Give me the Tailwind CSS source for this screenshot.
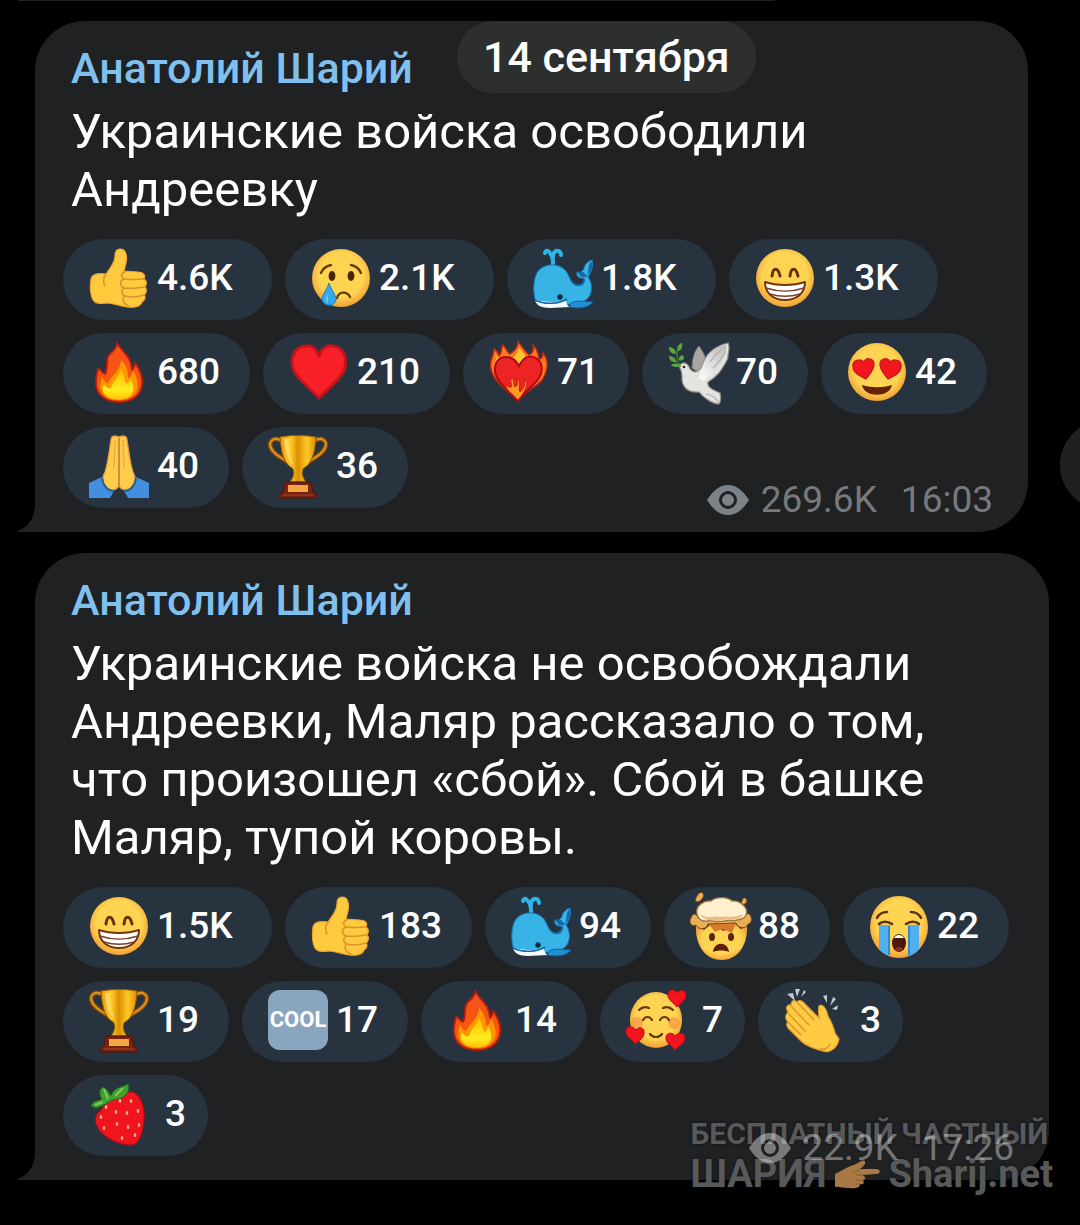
<!DOCTYPE html>
<html lang="ru">
<head>
    <meta charset="UTF-8">
    <meta name="viewport" content="width=device-width, initial-scale=1.0">
    <title>Анатолий Шарий</title>
    <script src="https://cdn.jsdelivr.net/npm/@tailwindcss/browser@4"></script>
</head>
<body class="bg-black font-['Roboto',sans-serif] text-white">
    <!-- Reaction icons -->
    <svg class="absolute size-0" aria-hidden="true">
        <defs>
            <radialGradient id="face" cx=".5" cy=".45" r=".55">
                <stop offset=".7" stop-color="#ffd452"/>
                <stop offset="1" stop-color="#f0a136"/>
            </radialGradient>
            <linearGradient id="flame" x1="0" y1="0" x2="0" y2="1">
                <stop offset="0" stop-color="#f4511e"/>
                <stop offset="1" stop-color="#f95a06"/>
            </linearGradient>
            <linearGradient id="flame-core" x1="0" y1="0" x2="0" y2="1">
                <stop offset="0" stop-color="#ffb300"/>
                <stop offset=".7" stop-color="#ffee1f"/>
                <stop offset="1" stop-color="#ffc107"/>
            </linearGradient>
            <linearGradient id="gold" x1="0" y1="0" x2="1" y2="0">
                <stop offset="0" stop-color="#e89e0c"/>
                <stop offset=".3" stop-color="#ffc928"/>
                <stop offset=".5" stop-color="#d99000"/>
                <stop offset=".75" stop-color="#ffc928"/>
                <stop offset="1" stop-color="#dc8d06"/>
            </linearGradient>
            <linearGradient id="wing" x1="0" y1="1" x2="1" y2="0">
                <stop offset="0" stop-color="#ffffff"/>
                <stop offset="1" stop-color="#b9b9b9"/>
            </linearGradient>

            <symbol id="thumb" class="overflow-visible" viewBox="0 0 60 60">
                <path fill="#ffca3e" stroke="#eda434" stroke-width="1.2" d="M31 1C27 1 26 4 26 8C26 15 21 20 17 26C10 25 3 26 2 31C1 38 1 46 4 52C7 57 14 55 19 55C27 56 32 58 38 59C46 60 52 58 53 54C56 52 57 49 55 47C58 45 58 41 56 39C58 36 58 33 55 31C57 27 54 24 49 24L35 23C36 18 39 12 37 6C36 2 34 1 31 1Z"/>
                <path fill="none" stroke="#e08f2b" stroke-width="1.5" stroke-linecap="round" d="M36 24C32 25 31 28 35 31C30 33 31 38 35 40C31 43 33 47 36 48C32 51 35 57 40 58M35 31C42 32 49 31 55 31M35 40C42 41 49 40 56 39M36 48C42 50 49 49 55 47M17 26C14 30 14 34 16 38"/>
            </symbol>

            <symbol id="cry" class="overflow-visible" viewBox="0 0 60 60">
                <circle cx="30" cy="30" r="29" fill="url(#face)"/>
                <g fill="none" stroke="#6b3b05" stroke-width="2.4" stroke-linecap="round">
                    <path d="M10 25C12 20 15 18 20 17M40 17C45 18 48 20 50 25M26 50C28 43 36 43 39 49"/>
                </g>
                <ellipse cx="21" cy="28" rx="3.4" ry="5" fill="#4a2503"/>
                <ellipse cx="40" cy="28" rx="3.4" ry="5" fill="#4a2503"/>
                <path fill="#36a9e8" stroke="#2184c7" d="M18 35C16 42 11 46 11 51C12 59 24 59 25 52C25 46 20 42 18 35Z"/>
                <path fill="#74c6f0" d="M17 46C14 49 14 53 17 55Z"/>
            </symbol>

            <symbol id="whale" class="overflow-visible" viewBox="0 0 60 60">
                <path fill="none" stroke="#2fb4e8" stroke-width="4" stroke-linecap="round" d="M20 16C20 11 20 8 17 5C15 2 13 2 12 5M20 9C20 4 23 2 25 3C27 3 28 5 28 7"/>
                <path fill="#38b3e6" stroke="#1476bb" stroke-width="1" d="M2 51C0 43 0 28 6 22C13 15 26 15 33 23C37 29 38 36 43 37C49 38 52 35 51 30C45 31 43 27 44 24C48 25 50 23 51 20C52 16 55 13 59 12C61 18 58 25 55 29C58 33 60 40 57 47C54 54 45 56 39 56L19 58C9 58 4 57 2 51Z"/>
                <path fill="#1569aa" d="M33 23C37 29 38 37 44 38C50 39 52 35 52 32L51 30C50 35 47 37 43 36C38 34 37 28 33 23ZM44 24L48 29L55 29L50 24ZM58 13C54 18 57 24 53 28C60 24 60 17 58 13Z"/>
                <path fill="#f4fbff" d="M2 52C11 54 25 55 32 52C34 55 34 58 37 59L17 60C8 60 3 57 2 52Z"/>
                <path fill="#238fd0" stroke="#1265a8" d="M37 56C42 51 53 54 60 54C55 60 46 61 37 59Z"/>
                <path fill="none" stroke="#1368a9" stroke-width="1.5" d="M2 52C12 57 26 56 34 51"/>
                <circle cx="27" cy="49" r="2.7" fill="#0c2b45"/>
            </symbol>

            <symbol id="grin" class="overflow-visible" viewBox="0 0 60 60">
                <circle cx="30" cy="30" r="29" fill="url(#face)"/>
                <path fill="none" stroke="#6b2f05" stroke-width="3" stroke-linecap="round" d="M17 28C18 19 23 19 25 28M35 28C36 19 41 19 43 28"/>
                <path fill="#fff" stroke="#73340b" stroke-width="2" stroke-linejoin="round" d="M10 34C22 38 38 38 50 34C50 46 41 52 30 52C19 52 10 46 10 34Z"/>
                <path fill="none" stroke="#783d2a" stroke-width="1.4" d="M11 40C23 44 37 44 49 40M15 46C25 49 35 49 45 46"/>
            </symbol>

            <symbol id="fire" class="overflow-visible" viewBox="0 0 60 60">
                <path fill="url(#flame)" stroke="#b71c0c" stroke-width="1.8" stroke-linejoin="round" d="M28 1C31 8 43 14 43 28C45 26 46 24 46 21C52 28 54 37 53 43C52 53 43 60 30 60C16 60 7 52 7 42C6 35 9 30 9 26C12 28 13 31 16 32C20 25 16 19 20 13C24 9 28 7 28 1Z"/>
                <path fill="#ff9800" d="M32 18C37 23 39 28 39 36C42 35 44 31 44 28C49 37 50 45 47 50C43 56 37 58 30 58C21 58 14 55 12 48C10 43 12 39 13 35C15 39 17 41 19 41C22 34 32 28 32 18Z"/>
                <path fill="url(#flame-core)" d="M32 26C35 32 35 37 37 42C40 41 41 38 41 36C46 44 45 50 41 54C35 59 23 58 18 54C13 50 13 46 15 42C17 46 20 47 22 46C24 39 31 34 32 26Z"/>
            </symbol>

            <symbol id="heart" class="overflow-visible" viewBox="0 0 60 60">
                <path fill="#f91f27" stroke="#c2141d" stroke-width="3" stroke-linejoin="round" d="M30 56C22 48 10 38 5 29C0 17 5 5 16 4C23 3 28 7 30 14C32 7 37 3 44 4C55 5 59 17 55 29C50 38 38 48 30 56Z"/>
            </symbol>

            <symbol id="fireheart" class="overflow-visible" viewBox="0 0 60 60">
                <path fill="#ff7a1a" stroke="#c62713" stroke-width="1.4" d="M29 59C18 48 5 41 2 27C0 18 5 15 5 7C9 9 9 12 10 14C13 12 12 6 14 3C18 7 18 11 21 12C26 9 29 6 29 0C34 5 36 10 40 13C44 11 45 7 44 3C49 8 49 12 50 17C53 17 54 14 54 11C61 20 58 30 53 38C46 46 36 49 29 59Z"/>
                <path fill="#ffc62d" d="M7 32C3 23 8 18 8 13C11 17 11 20 9 27ZM21 17C29 14 29 8 30 6C34 10 37 13 36 17L29 22Z"/>
                <path fill="#ee2424" stroke="#a80d12" stroke-width="2" d="M29 59C20 49 8 41 6 30C5 20 10 15 17 15C24 15 27 19 30 24C33 18 38 13 44 15C53 17 55 28 50 36C45 44 35 50 29 59Z"/>
                <path fill="#ff9a24" stroke="#c81f14" d="M29 58C25 53 19 50 16 43C19 44 20 46 22 45C24 42 20 39 23 36C26 39 24 42 26 45C29 44 29 40 28 36C33 40 29 46 31 50C36 46 36 41 35 36C40 42 37 49 29 58Z"/>
            </symbol>

            <symbol id="dove" class="overflow-visible" viewBox="0 0 60 60">
                <path fill="#a9a7a4" stroke="#77736d" d="M24 26C24 16 27 8 31 4C34 8 36 12 38 17L31 31Z"/>
                <path fill="#e5e3e0" stroke="#908d89" stroke-width="1.2" d="M13 22C17 19 21 23 22 27C27 32 29 30 34 25C37 11 48 4 60 1C63 7 59 12 60 16C54 28 49 35 40 40C39 45 43 47 52 51C53 55 53 59 51 62C44 62 35 55 31 50C20 51 13 45 14 34C14 29 12 26 11 24Z"/>
                <path fill="url(#wing)" d="M31 36C35 15 46 5 58 3C60 13 48 31 35 39Z"/>
                <path fill="none" stroke="#b5b2ad" stroke-width="1.2" d="M42 20C46 14 50 10 54 7M45 26C50 21 55 15 58 9M38 52C44 53 48 56 50 60"/>
                <circle cx="16" cy="25" r="1.3" fill="#282724"/>
                <path fill="none" stroke="#367c2c" stroke-width="1.7" d="M12 25C9 18 8 12 10 4"/>
                <path fill="#55a73b" d="M10 7C9 3 13 1 14 1C15 6 13 9 10 9ZM8 12C3 12 1 9 1 5C5 5 8 8 8 12ZM11 16C13 12 16 13 16 16C15 19 13 19 11 18ZM9 20C4 21 1 18 1 14C5 14 8 17 9 20ZM13 24C10 26 4 25 3 23C7 21 11 21 13 24Z"/>
            </symbol>

            <symbol id="hearteyes" class="overflow-visible" viewBox="0 0 60 60">
                <circle cx="30" cy="30" r="29" fill="url(#face)"/>
                <path fill="#f1171d" stroke="#c51a1a" stroke-width="1.2" d="M19 37C13 34 6 31 6 25C5 18 13 16 17 20C19 15 26 16 27 21C28 27 22 33 19 37Z"/>
                <path fill="#f1171d" stroke="#c51a1a" stroke-width="1.2" d="M41 37C47 34 54 31 54 25C55 18 47 16 43 20C41 15 34 16 33 21C32 27 38 33 41 37Z"/>
                <path fill="#632105" d="M15 43C25 46 35 46 45 43C43 56 17 56 15 43Z"/>
            </symbol>

            <symbol id="pray" class="overflow-visible" viewBox="0 0 60 60">
                <path fill="#438fdf" d="M0 47L13 41L26 53L21 62H0ZM60 47L47 41L34 53L39 62H60Z"/>
                <path fill="#ffcc4b" stroke="#e3983b" stroke-width="1.3" d="M30 1C25 -1 22 0 22 4C20 16 19 27 16 36C12 43 14 52 23 54C27 54 29 52 30 49C31 52 33 54 37 54C46 52 48 43 44 36C41 27 40 16 38 4C38 0 35 -1 30 1Z"/>
                <path fill="none" stroke="#ba7128" stroke-width="1.3" d="M30 2V50"/>
                <path fill="none" stroke="#f0ac45" stroke-width="1.5" d="M26 4C26 13 25 24 25 32M34 4C34 13 35 24 35 32"/>
                <path fill="none" stroke="#27618f" stroke-width="2" d="M13 42C14 50 19 55 25 55M47 42C46 50 41 55 35 55"/>
            </symbol>

            <symbol id="trophy" class="overflow-visible" viewBox="0 0 60 60">
                <path fill="none" stroke="#8d4b07" stroke-width="4.5" d="M14 5C6 0 0 5 3 12C6 19 14 22 20 26M46 5C54 0 60 5 57 12C54 19 46 22 40 26"/>
                <path fill="none" stroke="#d9951f" stroke-width="2" d="M14 5C6 0 0 5 3 12C6 19 14 22 20 26M46 5C54 0 60 5 57 12C54 19 46 22 40 26"/>
                <path fill="url(#gold)" stroke="#93590a" stroke-width="1" d="M12 1C23 -1 37 -1 48 1C47 19 43 28 36 32C33 35 34 41 38 46H22C26 41 27 35 24 32C17 28 13 19 12 1Z"/>
                <path fill="#ffd85e" d="M16 3H21C21 14 23 23 26 29C19 24 17 15 16 3Z"/>
                <path fill="#75220f" stroke="#4d1208" d="M17 46H43L45 56L49 59V62H11V59L15 56Z"/>
                <path fill="#f3a541" d="M20 49H40V56H20Z"/>
                <path stroke="#b3432b" d="M15 59H45"/>
            </symbol>

            <symbol id="mindblown" class="overflow-visible" viewBox="0 0 60 60">
                <path fill="url(#face)" d="M6 29C5 46 13 64 32 64C49 64 58 47 57 30L51 33L44 27L34 35L21 28L14 34Z"/>
                <path fill="#d67c2c" d="M18 27L25 36L32 33L42 37L46 27Z"/>
                <path fill="#eaae55" stroke="#7c4b1c" stroke-width="1" d="M1 22C-2 27 2 31 6 29C9 35 17 33 18 28L46 27C48 33 57 33 58 28C64 27 61 16 57 18L49 22L8 22C7 17 2 17 1 22ZM7 0C11 -7 16 -2 12 3C8 8 3 6 7 0ZM52 5C53 -1 59 3 56 7C54 9 50 9 52 5Z"/>
                <path fill="#fff0d0" stroke="#9e7140" stroke-width="1.3" d="M7 18C5 10 14 4 21 5C27 0 38 1 42 5C50 4 59 12 56 19C54 25 47 23 43 25C38 22 35 27 30 25C25 27 21 23 18 25C12 26 8 23 7 18Z"/>
                <path fill="#e8be84" d="M10 18C18 24 24 19 29 21C35 19 43 23 53 18C51 25 44 22 42 24C36 22 34 25 29 24C23 25 14 25 10 18Z"/>
                <ellipse cx="22" cy="41" rx="3" ry="4" fill="#55280a"/>
                <ellipse cx="41" cy="41" rx="3" ry="4" fill="#55280a"/>
                <path fill="#5c1e0a" d="M23 56C24 45 38 45 39 56C35 54 27 54 23 56Z"/>
            </symbol>

            <symbol id="sob" class="overflow-visible" viewBox="0 0 60 60">
                <ellipse cx="30" cy="31" rx="29" ry="31" fill="url(#face)"/>
                <path fill="#4fb0ed" d="M10 29H21V60C15 58 11 55 10 53ZM39 29H50V53C48 56 44 59 39 60Z"/>
                <path stroke="#2579bf" stroke-width="1.4" d="M20 30V59M40 30V59"/>
                <path fill="none" stroke="#5d3310" stroke-width="2.5" stroke-linecap="round" d="M8 22C10 18 14 16 18 16M42 16C46 16 50 18 52 22M10 28C13 25 19 25 23 28M37 28C41 25 47 25 50 28"/>
                <ellipse cx="30" cy="47" rx="7" ry="9" fill="#4a1708"/>
                <path fill="#fff" d="M25 42C27 38 33 38 35 42Z"/>
                <path fill="#8f2f20" d="M26 53C28 50 32 50 34 53C32 56 28 56 26 53Z"/>
            </symbol>

            <symbol id="lovely" class="overflow-visible" viewBox="0 0 60 60">
                <ellipse cx="30" cy="30" rx="26" ry="28" fill="url(#face)"/>
                <circle cx="11" cy="33" r="6" fill="#f59545" opacity=".7"/>
                <circle cx="48" cy="33" r="6" fill="#f59545" opacity=".7"/>
                <path fill="none" stroke="#66380e" stroke-width="2.2" stroke-linecap="round" d="M13 20C16 17 19 16 23 18M37 18C41 16 44 17 47 20M17 30C19 26 24 26 26 30M34 30C36 26 41 26 43 30M24 44C27 48 33 48 36 44"/>
                <g fill="#f4141d" stroke="#b50c18">
                    <path d="M51 17C47 12 41 9 42 4C43 -1 49 -1 51 3C54 -1 60 0 60 5C60 10 55 13 51 17Z"/>
                    <path d="M10 54C6 50 -1 46 0 41C0 36 6 35 10 40C13 36 19 38 18 43C18 48 13 50 10 54Z"/>
                    <path d="M49 60C45 55 40 53 40 48C40 42 47 42 49 46C52 42 59 42 59 48C59 53 53 56 49 60Z"/>
                </g>
            </symbol>

            <symbol id="clap" class="overflow-visible" viewBox="0 0 60 60">
                <path fill="#ffcb43" stroke="#de952e" stroke-width="1.2" d="M4 22C1 18 3 14 7 15C7 11 10 9 13 12C15 9 19 11 21 14L35 28C35 23 33 17 36 15C41 15 43 21 44 26C48 33 50 38 51 43L55 49C54 57 48 61 43 62C34 60 24 57 18 52L6 40C2 37 2 33 4 32C1 29 1 25 4 22Z"/>
                <path fill="none" stroke="#df9631" stroke-width="1.5" stroke-linecap="round" d="M7 16L25 35M13 12L30 30M4 23L21 41M4 32L17 45M36 59C40 60 44 58 46 54"/>
                <path fill="#c3c9cf" d="M3 4L11 11L9 3ZM11 -1L13 7L16 -1ZM20 0L17 7L22 2ZM39 6L43 13L43 5ZM49 7L46 16L52 9ZM48 19L54 15L53 20Z"/>
            </symbol>

            <symbol id="strawberry" class="overflow-visible" viewBox="0 0 60 60">
                <path fill="#f0141f" stroke="#b30c18" stroke-width="1.2" d="M12 26C18 17 32 7 43 8C52 10 56 24 55 36C54 49 50 60 43 61C32 61 14 55 8 42C4 35 7 30 12 26Z"/>
                <path fill="#3fa02f" stroke="#206c1d" stroke-width="1" d="M2 22C4 17 9 17 13 15C10 11 10 5 14 3C19 6 20 9 22 12C24 4 31 4 39 0C42 7 36 14 28 15C20 16 16 22 7 24Z"/>
                <path fill="none" stroke="#7dcc55" stroke-width="2" d="M15 5L19 15M26 12L34 4M6 21L14 18"/>
                <g fill="#ffb08c">
                    <ellipse cx="31" cy="17" rx="1.3" ry="2"/><ellipse cx="42" cy="17" rx="1.3" ry="2"/>
                    <ellipse cx="17" cy="23" rx="1.3" ry="2"/><ellipse cx="27" cy="28" rx="1.3" ry="2"/>
                    <ellipse cx="38" cy="29" rx="1.3" ry="2"/><ellipse cx="49" cy="27" rx="1.3" ry="2"/>
                    <ellipse cx="12" cy="33" rx="1.3" ry="2"/><ellipse cx="28" cy="40" rx="1.3" ry="2"/>
                    <ellipse cx="39" cy="43" rx="1.3" ry="2"/><ellipse cx="50" cy="41" rx="1.3" ry="2"/>
                    <ellipse cx="15" cy="44" rx="1.3" ry="2"/><ellipse cx="33" cy="54" rx="1.3" ry="2"/>
                    <ellipse cx="46" cy="51" rx="1.3" ry="2"/>
                </g>
            </symbol>

            <symbol id="eye" viewBox="0 0 42 32">
                <path fill="currentColor" fill-rule="evenodd" d="M0 16C7 5 14 1 21 1S35 5 42 16C35 27 28 31 21 31S7 27 0 16ZM21 7A9 9 0 0 0 21 25A9 9 0 0 0 21 7ZM21 10A6 6 0 0 1 21 22A6 6 0 0 1 21 10Z"/>
            </symbol>

            <symbol id="tail" viewBox="0 0 18 50">
                <path fill="currentColor" d="M17 0V24C16 37 10 45 1 48C-1 49 0 50 2 50H18V0Z"/>
            </symbol>

            <symbol id="point" viewBox="0 0 46 30">
                <path fill="#a97945" d="M1 15C8 12 14 7 20 6C24 4 28 0 31 2C32 6 28 8 26 10L42 10C47 10 47 15 42 15L28 16C33 18 31 21 29 21C31 24 29 26 26 25C26 29 21 30 15 29C8 29 4 27 1 28Z"/>
                <path fill="none" stroke="#8a6034" d="M26 10C23 12 21 13 19 12M28 16H22M29 21H22M26 25H20"/>
            </symbol>
        </defs>
    </svg>

    <main class="relative min-h-screen overflow-hidden">
        <!-- Edge of the previous message -->
        <div class="ml-[18px] mr-[305px] h-px rounded-br-full bg-[#202123]"></div>

        <div class="flex flex-col gap-[21px] pt-5 pl-[35px]">
            <!-- Message 1 -->
            <article class="relative mr-[52px] rounded-[50px] rounded-bl-none bg-[#202123] px-7 pt-[21px] pb-6">
                <svg class="absolute bottom-0 -left-[17px] h-[50px] w-[18px] text-[#202123]"><use href="#tail"/></svg>
                <h2 class="px-2 text-[43px] leading-[52px] font-medium text-[#7fc0ee]">Анатолий Шарий</h2>
                <p class="mt-[9px] pr-8 pl-2 text-[49px] leading-[58px]">Украинские войска освободили Андреевку</p>

                <div class="mt-5 flex flex-wrap gap-[13px] text-[37px] leading-[44px] font-medium">
                    <button class="flex h-[81px] w-[209px] items-center gap-2 rounded-full bg-[#27333f] pb-1 pl-[26px]">
                        <svg class="size-[60px] shrink-0 overflow-visible"><use href="#thumb"/></svg>4.6K
                    </button>
                    <button class="flex h-[81px] w-[209px] items-center gap-2 rounded-full bg-[#27333f] pb-1 pl-[26px]">
                        <svg class="size-[60px] shrink-0 overflow-visible"><use href="#cry"/></svg>2.1K
                    </button>
                    <button class="flex h-[81px] w-[209px] items-center gap-2 rounded-full bg-[#27333f] pb-1 pl-[26px]">
                        <svg class="size-[60px] shrink-0 overflow-visible"><use href="#whale"/></svg>1.8K
                    </button>
                    <button class="flex h-[81px] w-[209px] items-center gap-2 rounded-full bg-[#27333f] pb-1 pl-[26px]">
                        <svg class="size-[60px] shrink-0 overflow-visible"><use href="#grin"/></svg>1.3K
                    </button>
                    <button class="flex h-[81px] w-[187px] items-center gap-2 rounded-full bg-[#27333f] pb-1 pl-[26px]">
                        <svg class="size-[60px] shrink-0 overflow-visible"><use href="#fire"/></svg>680
                    </button>
                    <button class="flex h-[81px] w-[187px] items-center gap-2 rounded-full bg-[#27333f] pb-1 pl-[26px]">
                        <svg class="size-[60px] shrink-0 overflow-visible"><use href="#heart"/></svg>210
                    </button>
                    <button class="flex h-[81px] w-[166px] items-center gap-2 rounded-full bg-[#27333f] pb-1 pl-[26px]">
                        <svg class="size-[60px] shrink-0 overflow-visible"><use href="#fireheart"/></svg>71
                    </button>
                    <button class="flex h-[81px] w-[166px] items-center gap-2 rounded-full bg-[#27333f] pb-1 pl-[26px]">
                        <svg class="size-[60px] shrink-0 overflow-visible"><use href="#dove"/></svg>70
                    </button>
                    <button class="flex h-[81px] w-[166px] items-center gap-2 rounded-full bg-[#27333f] pb-1 pl-[26px]">
                        <svg class="size-[60px] shrink-0 overflow-visible"><use href="#hearteyes"/></svg>42
                    </button>
                    <button class="flex h-[81px] w-[166px] items-center gap-2 rounded-full bg-[#27333f] pb-1 pl-[26px]">
                        <svg class="size-[60px] shrink-0 overflow-visible"><use href="#pray"/></svg>40
                    </button>
                    <button class="flex h-[81px] w-[166px] items-center gap-2 rounded-full bg-[#27333f] pb-1 pl-[26px]">
                        <svg class="size-[60px] shrink-0 overflow-visible"><use href="#trophy"/></svg>36
                    </button>
                </div>

                <div class="absolute right-[35px] bottom-2.5 flex items-center text-[37px] leading-[44px] text-[#77797c]">
                    <svg class="mr-3 h-8 w-[42px] text-[#7b8388]"><use href="#eye"/></svg>
                    <span class="mr-6">269.6K</span>
                    <time>16:03</time>
                </div>
            </article>

            <!-- Message 2 -->
            <article class="relative mr-[31px] rounded-[50px] rounded-bl-none bg-[#202123] px-7 pt-[21px] pb-6">
                <svg class="absolute bottom-0 -left-[17px] h-[50px] w-[18px] text-[#202123]"><use href="#tail"/></svg>
                <h2 class="px-2 text-[43px] leading-[52px] font-medium text-[#7fc0ee]">Анатолий Шарий</h2>
                <p class="mt-[9px] pr-8 pl-2 text-[49px] leading-[58px]">Украинские войска не освобождали Андреевки, Маляр рассказало о том, что произошел «сбой». Сбой в башке Маляр, тупой коровы.</p>

                <div class="mt-5 flex flex-wrap gap-[13px] text-[37px] leading-[44px] font-medium">
                    <button class="flex h-[81px] w-[209px] items-center gap-2 rounded-full bg-[#27333f] pb-1 pl-[26px]">
                        <svg class="size-[60px] shrink-0 overflow-visible"><use href="#grin"/></svg>1.5K
                    </button>
                    <button class="flex h-[81px] w-[187px] items-center gap-2 rounded-full bg-[#27333f] pb-1 pl-[26px]">
                        <svg class="size-[60px] shrink-0 overflow-visible"><use href="#thumb"/></svg>183
                    </button>
                    <button class="flex h-[81px] w-[166px] items-center gap-2 rounded-full bg-[#27333f] pb-1 pl-[26px]">
                        <svg class="size-[60px] shrink-0 overflow-visible"><use href="#whale"/></svg>94
                    </button>
                    <button class="flex h-[81px] w-[166px] items-center gap-2 rounded-full bg-[#27333f] pb-1 pl-[26px]">
                        <svg class="size-[60px] shrink-0 overflow-visible"><use href="#mindblown"/></svg>88
                    </button>
                    <button class="flex h-[81px] w-[166px] items-center gap-2 rounded-full bg-[#27333f] pb-1 pl-[26px]">
                        <svg class="size-[60px] shrink-0 overflow-visible"><use href="#sob"/></svg>22
                    </button>
                    <button class="flex h-[81px] w-[166px] items-center gap-2 rounded-full bg-[#27333f] pb-1 pl-[26px]">
                        <svg class="size-[60px] shrink-0 overflow-visible"><use href="#trophy"/></svg>19
                    </button>
                    <button class="flex h-[81px] w-[166px] items-center gap-2 rounded-full bg-[#27333f] pb-1 pl-[26px]">
                        <span class="flex size-[60px] shrink-0 items-center justify-center rounded-xl bg-[#8aa5be] text-[22px] leading-none font-bold">COOL</span>17
                    </button>
                    <button class="flex h-[81px] w-[166px] items-center gap-2 rounded-full bg-[#27333f] pb-1 pl-[26px]">
                        <svg class="size-[60px] shrink-0 overflow-visible"><use href="#fire"/></svg>14
                    </button>
                    <button class="flex h-[81px] w-[145px] items-center gap-4 rounded-full bg-[#27333f] pb-1 pl-[26px]">
                        <svg class="size-[60px] shrink-0 overflow-visible"><use href="#lovely"/></svg>7
                    </button>
                    <button class="flex h-[81px] w-[145px] items-center gap-4 rounded-full bg-[#27333f] pb-1 pl-[26px]">
                        <svg class="size-[60px] shrink-0 overflow-visible"><use href="#clap"/></svg>3
                    </button>
                    <button class="flex h-[81px] w-[145px] items-center gap-4 rounded-full bg-[#27333f] pb-1 pl-[26px]">
                        <svg class="size-[60px] shrink-0 overflow-visible"><use href="#strawberry"/></svg>3
                    </button>
                </div>

                <!-- Watermark -->
                <div class="absolute -right-1 -bottom-4 font-bold whitespace-nowrap text-[#58595b] text-shadow-[0_0_3px_#101113]">
                    <p class="text-[30px] leading-[36px]">БЕСПЛАТНЫЙ ЧАСТНЫЙ</p>
                    <p class="flex items-center text-[38px] leading-[44px]">ШАРИЯ<svg class="mx-2 h-[30px] w-[46px]"><use href="#point"/></svg>Sharij.net</p>
                </div>

                <div class="absolute right-[35px] bottom-2.5 flex items-center text-[37px] leading-[44px] text-white/40">
                    <svg class="mr-3 h-8 w-[42px]"><use href="#eye"/></svg>
                    <span class="mr-6">22.9K</span>
                    <time>17:26</time>
                </div>
            </article>
        </div>

        <!-- Date chip -->
        <div class="absolute top-[21px] left-[457px] flex h-[72px] items-center rounded-full bg-[#2d2f2e] px-[26px] text-[43px] leading-[52px] font-medium">14 сентября</div>

        <!-- Share button, partly off screen -->
        <button class="absolute top-[420px] -right-[70px] size-[90px] rounded-full bg-[#202020]" aria-label="Поделиться"></button>
    </main>
</body>
</html>
